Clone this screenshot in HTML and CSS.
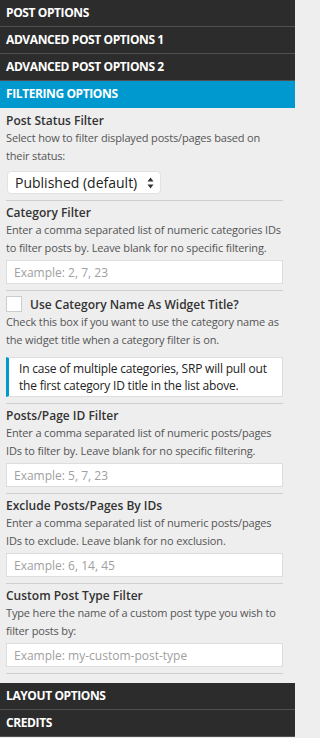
FILE: index.html
```html
<!DOCTYPE html>
<html>
<head>
<meta charset="utf-8">
<link rel="stylesheet" href="styles.css">
</head>
<body>
<div class="accordion">
  <div class="bar">Post Options</div>
  <div class="bar">Advanced Post Options 1</div>
  <div class="bar">Advanced Post Options 2</div>
  <div class="bar active">Filtering Options</div>
  <div class="panel">
    <div class="field">
      <div class="label">Post Status Filter</div>
      <div class="desc">Select how to filter displayed posts/pages based on their status:</div>
      <div class="select-wrap">
        <select class="select"><option>Published (default)</option></select>
        <svg class="arrows" width="7" height="12" viewBox="0 0 7 12"><path d="M3.5 0.5 L6.5 4.5 L0.5 4.5 Z M3.5 11.5 L6.5 7.5 L0.5 7.5 Z" fill="#333"/></svg>
      </div>
    </div>
    <div class="field">
      <div class="label">Category Filter</div>
      <div class="desc">Enter a comma separated list of numeric categories IDs to filter posts by. Leave blank for no specific filtering.</div>
      <input class="text" type="text" placeholder="Example: 2, 7, 23">
    </div>
    <div class="field">
      <label class="check-row"><span class="checkbox"></span><span class="label">Use Category Name As Widget Title?</span></label>
      <div class="desc">Check this box if you want to use the category name as the widget title when a category filter is on.</div>
      <div class="note">In case of multiple categories, SRP will pull out the first category ID title in the list above.</div>
    </div>
    <div class="field">
      <div class="label">Posts/Page ID Filter</div>
      <div class="desc">Enter a comma separated list of numeric posts/pages IDs to filter by. Leave blank for no specific filtering.</div>
      <input class="text" type="text" placeholder="Example: 5, 7, 23">
    </div>
    <div class="field">
      <div class="label">Exclude Posts/Pages By IDs</div>
      <div class="desc">Enter a comma separated list of numeric posts/pages IDs to exclude. Leave blank for no exclusion.</div>
      <input class="text" type="text" placeholder="Example: 6, 14, 45">
    </div>
    <div class="field">
      <div class="label">Custom Post Type Filter</div>
      <div class="desc">Type here the name of a custom post type you wish to filter posts by:</div>
      <input class="text" type="text" placeholder="Example: my-custom-post-type">
    </div>
  </div>
  <div class="bar">Layout Options</div>
  <div class="bar">Credits</div>
</div>
</body>
</html>
```
FILE: styles.css
```css
html, body {
  margin: 0;
  padding: 0;
  background: #eeeeee;
}
body {
  width: 295px;
  font-family: "Open Sans", "Liberation Sans", sans-serif;
}
.accordion {
  display: flex;
  flex-direction: column;
}
.bar {
  background: #2c2c2c;
  color: #ffffff;
  text-transform: uppercase;
  font-weight: 700;
  font-size: 12px;
  letter-spacing: -0.4px;
  height: 26px;
  line-height: 26px;
  padding-left: 6px;
  border-bottom: 1px solid #505050;
}
.bar.active {
  background: #0099cf;
  border-bottom-color: #0099cf;
}
.panel {
  padding: 1px 12px 9px 6px;
  display: flex;
  flex-direction: column;
}
.field {
  padding: 3px 0 6px;
  border-bottom: 1px solid #cfcfcf;
  display: flex;
  flex-direction: column;
  align-items: flex-start;
}
.label {
  font-size: 12px;
  font-weight: 600;
  color: #333;
  line-height: 17px;
}
.desc {
  font-size: 11px;
  color: #555;
  line-height: 18px;
  letter-spacing: -0.15px;
  margin-right: -2px;
}
.select-wrap {
  position: relative;
  margin: 6px 0 0 1px;
}
.select {
  appearance: none;
  -webkit-appearance: none;
  width: 154px;
  height: 23px;
  border: 1px solid #e2e2e2;
  border-radius: 4px;
  background: #fff;
  font-family: "Open Sans", "Liberation Sans", sans-serif;
  font-size: 14px;
  color: #222;
  padding: 0 0 0 7px;
  margin: 0;
  display: block;
}
.arrows {
  position: absolute;
  right: 7px;
  top: 6px;
}
.text {
  margin-top: 3px;
  width: 100%;
  box-sizing: border-box;
  height: 24px;
  border: 1px solid #dddddd;
  background: #fff;
  padding: 0 7px;
  font-family: "Open Sans", "Liberation Sans", sans-serif;
  font-size: 12px;
  color: #333;
  outline: none;
}
.text::placeholder {
  color: #a0a0a0;
}
.check-row {
  display: flex;
  align-items: center;
  gap: 8px;
  margin-top: 1px;
  height: 18px;
}
.checkbox {
  width: 14px;
  height: 14px;
  border: 1px solid #cccccc;
  background: #fff;
}
.note {
  margin-top: 8px;
  align-self: stretch;
  background: #fff;
  border: 1px solid #dddddd;
  border-left: 3px solid #0099cf;
  padding: 2px 10px 2px 10px;
  font-size: 12px;
  line-height: 17px;
  letter-spacing: -0.2px;
  color: #222;
}
```
